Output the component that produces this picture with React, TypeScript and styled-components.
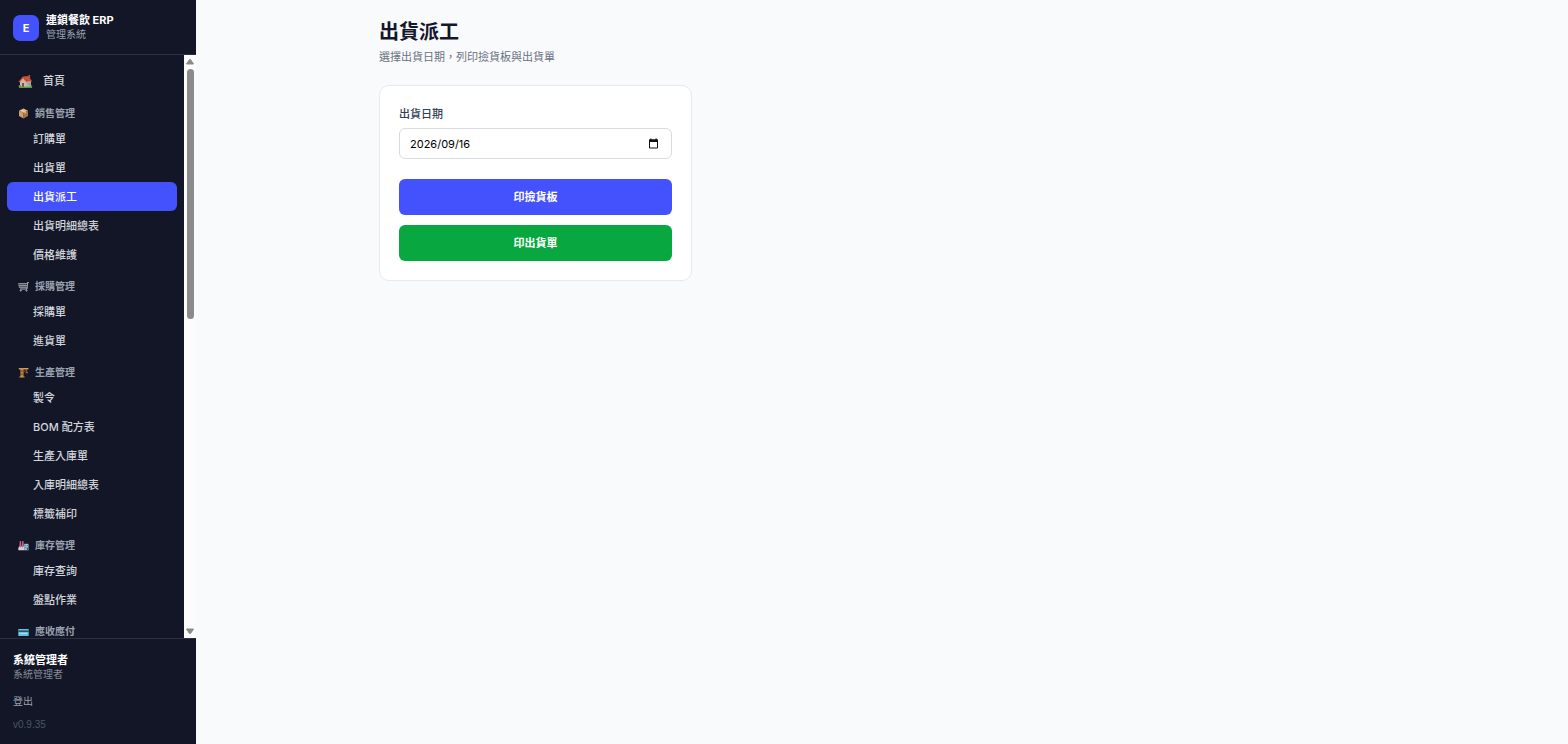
import React, { useState } from "react";
import styled, { createGlobalStyle, css } from "styled-components";

const GlobalStyle = createGlobalStyle`
  *, *::before, *::after { box-sizing: border-box; }
  body {
    margin: 0;
    background: #f9fafc;
    color: #14162a;
    font-family: "Liberation Sans", "Noto Sans CJK TC", sans-serif;
    font-size: 11px;
    line-height: 16px;
  }
  button, input { font-family: inherit; }
  h1, h2, p, ul { margin: 0; padding: 0; }
  ul { list-style: none; }
`;

const Shell = styled.div`
  display: grid;
  grid-template-columns: 196px 1fr;
  min-height: 100vh;
`;

const Sidebar = styled.aside`
  position: sticky;
  top: 0;
  height: 100vh;
  display: flex;
  flex-direction: column;
  background: #131626;
  color: #d1d5dc;
`;

const Brand = styled.div`
  display: flex;
  align-items: center;
  gap: 7px;
  padding: 13px 13px 12px;
  border-bottom: 1px solid #2b303f;
`;

const Logo = styled.div`
  width: 26px;
  height: 26px;
  border-radius: 7px;
  background: #4452fe;
  color: #fff;
  font-family: Inter, sans-serif;
  font-size: 11px;
  font-weight: 700;
  line-height: 26px;
  text-align: center;
`;

const BrandName = styled.div`
  color: #fff;
  font-family: Inter, "Noto Sans CJK TC", sans-serif;
  font-size: 11px;
  line-height: 15px;
  font-weight: 700;
`;

const BrandSub = styled.div`
  color: #99a1af;
  font-size: 10px;
  line-height: 14px;
`;

const ScrollArea = styled.div`
  flex: 1;
  min-height: 0;
  display: flex;
`;

const Nav = styled.nav`
  flex: 1;
  overflow: hidden;
  padding: 11px 7px 0;
`;

const NavLink = styled.a<{ $active?: boolean; $top?: boolean }>`
  display: flex;
  align-items: center;
  gap: 10px;
  height: ${(p) => (p.$top ? 30 : 29)}px;
  padding-left: ${(p) => (p.$top ? 11 : 26)}px;
  border-radius: 6px;
  color: #d1d5dc;
  font-family: Inter, "Noto Sans CJK TC", sans-serif;
  font-weight: 500;
  text-decoration: none;
  ${(p) =>
    p.$active &&
    css`
      background: #4452fe;
      color: #fff;
    `}
`;

const SectionTitle = styled.h2`
  display: flex;
  align-items: center;
  gap: 6px;
  padding: 10px 11px 2px;
  color: #99a1af;
  font-size: 10px;
  line-height: 16px;
  font-weight: 600;

  svg { margin-bottom: 1px; }
`;

const Rail = styled.div`
  width: 12px;
  display: flex;
  flex-direction: column;
  align-items: center;
  background: #fcfcfc;
`;

const RailTrack = styled.div`
  flex: 1;
  width: 7px;
`;

const RailThumb = styled.div`
  height: 45%;
  border-radius: 4px;
  background: #8b8b8b;
`;

const Account = styled.div`
  padding: 13px 13px 12px;
  border-top: 1px solid #2b303f;
  font-size: 10px;
  line-height: 14px;
`;

const UserName = styled.div`
  color: #fff;
  font-size: 11px;
  line-height: 16px;
  font-weight: 700;
`;

const UserRole = styled.div`
  color: #858b98;
`;

const LogoutButton = styled.button`
  display: block;
  margin: 13px 0 9px;
  padding: 0;
  border: 0;
  background: none;
  color: #99a1af;
  font-size: 10px;
  line-height: 14px;
  cursor: pointer;
`;

const Version = styled.div`
  color: #4a5565;
`;

const Main = styled.main`
  width: 100%;
  max-width: 1046px;
  margin: 0 auto;
  padding: 20px;
`;

const PageTitle = styled.h1`
  font-size: 20px;
  line-height: 24px;
  font-weight: 700;
`;

const PageHint = styled.p`
  margin-top: 5px;
  color: #6a7282;
  font-size: 11px;
`;

const Card = styled.form`
  max-width: 313px;
  margin-top: 20px;
  padding: 19px;
  border: 1px solid #e7e9ee;
  border-radius: 10px;
  background: #fff;
`;

const FieldLabel = styled.label`
  display: block;
  margin-bottom: 5px;
  color: #364153;
  font-size: 11px;
  line-height: 18px;
  font-weight: 500;
`;

const DateField = styled.div`
  display: flex;
  align-items: center;
  height: 31px;
  padding: 0 12px 0 10px;
  border: 1px solid #d8dbe0;
  border-radius: 6px;
  background: #fff;
`;

const DateInput = styled.input`
  flex: 1;
  min-width: 0;
  padding: 0;
  border: 0;
  outline: 0;
  background: none;
  color: #000;
  font-family: Inter, sans-serif;
  font-size: 11px;
  line-height: 16px;
`;

const PickerButton = styled.button`
  display: flex;
  padding: 0;
  border: 0;
  background: none;
  cursor: pointer;
`;

const Actions = styled.div`
  display: grid;
  gap: 10px;
  margin-top: 20px;
`;

const ActionButton = styled.button<{ $tone: "primary" | "success" }>`
  height: 36px;
  padding: 0 10px 2px;
  border: 0;
  border-radius: 6px;
  background: ${(p) => (p.$tone === "primary" ? "#4452fe" : "#09a740")};
  color: #fff;
  font-size: 11px;
  font-weight: 700;
  cursor: pointer;
`;

const HouseIcon = () => (
  <svg width="15" height="15" viewBox="0 0 15 15" aria-hidden="true">
    <path d="M3 7h10v6H3z" fill="#b9aea5" />
    <path d="M2 7.500 5 4l3.500 4v5H2z" fill="#cdb9a9" />
    <path d="M5 2.500 10.500 2 14.200 7.600H9.500z" fill="#c8533a" />
    <path d="M.6 7.800 5 2.500l4.800 5.600-1 .6L5 4.600 1.600 8.600z" fill="#e0603f" />
    <path d="M10.500 1h1.700v3h-1.700z" fill="#a5563f" />
    <path d="M4 9h2v4H4z" fill="#82523a" />
    <path d="M10 9h2.200v2H10z" fill="#6ba5c9" />
    <path d="M1 12.600h13V14H1z" fill="#5d9a4b" />
    <circle cx="1.900" cy="12.200" r="1.200" fill="#5d9a4b" />
    <circle cx="13.200" cy="12.300" r="1.100" fill="#5d9a4b" />
  </svg>
);

const BoxIcon = () => (
  <svg width="11" height="11" viewBox="0 0 11 11" aria-hidden="true">
    <path d="M5.500.6 10 2.700 5.600 5 1 2.800z" fill="#e0b985" />
    <path d="M1 2.800 5.600 5v5.500L1 8.100z" fill="#cfa06a" />
    <path d="M10 2.700v5.400l-4.400 2.400V5z" fill="#a87543" />
    <path d="M3 1.800 7.700 4v1.200l-1 .5V4.400L2.200 2.200z" fill="#ecd2a8" />
  </svg>
);

const CartIcon = () => (
  <svg width="11" height="11" viewBox="0 0 11 11" fill="none" stroke="#b4b9c0" aria-hidden="true">
    <path d="M10.800 1.500H9.500L9 8H2" />
    <path d="M.4 2.500h8.900M.8 4.500h8.300M1.200 6.400h7.900M.8 2.500l.6 4M3 2.500v4M5 2.500v4M7 2.500v4" strokeWidth=".7" />
    <circle cx="2.800" cy="9.500" r=".6" />
    <circle cx="8.500" cy="9.500" r=".6" />
  </svg>
);

const CraneIcon = () => (
  <svg width="11" height="11" viewBox="0 0 11 11" aria-hidden="true">
    <path d="M.8 1h9.600v1.400H.8z" fill="#e3a04a" />
    <path d="M2.500 1h3v9h-3z" fill="#d28f3d" />
    <path d="M3.200 3.500 4.800 5M4.800 3.500 3.200 5M3.200 6.500 4.800 8M4.800 6.500 3.200 8" stroke="#5b3b1f" strokeWidth=".7" />
    <path d="M5.500 5 8.500 2.400v2.400" fill="none" stroke="#a9793f" strokeWidth=".7" />
    <path d="M7.500 4.700H10v1.600H7.500z" fill="#8a5360" />
    <path d="M1.300 9.500h5.300v1H1.300z" fill="#d7954b" />
  </svg>
);

const FactoryIcon = () => (
  <svg width="11" height="11" viewBox="0 0 11 11" aria-hidden="true">
    <path d="M1.800 1h1.300l.4 6H1.300z" fill="#c0637f" />
    <path d="M4.200 1h1.300l.4 6H3.800z" fill="#c0637f" />
    <path d="M.3 10.300V7.700L2.200 6v1.600L4.200 6v1.600L6.200 6v4.300z" fill="#d0cfda" />
    <path d="M6.200 3.800h4.300v6.500H6.200z" fill="#9dc0d3" />
    <path d="M7.200 5h1v1h-1zM8.900 5h.9v1h-.9zM7.200 7h1v1h-1z" fill="#4c7690" />
    <path d="M8.800 7.500h1.200v2.800H8.800z" fill="#485a70" />
  </svg>
);

const CardIcon = () => (
  <svg width="11" height="11" viewBox="0 0 11 11" aria-hidden="true">
    <rect x=".3" y="3" width="10.400" height="7" rx=".6" fill="#67bfe4" />
    <path d="M.3 4.400h10.400v1.600H.3z" fill="#275468" />
    <path d="M1.300 7h8v1h-8z" fill="#a9dcee" />
  </svg>
);

const CalendarIcon = () => (
  <svg width="11" height="12" viewBox="0 0 11 12" aria-hidden="true">
    <path d="M1.500 2h8v8h-8z" fill="none" stroke="#111" />
    <path d="M1 1.500h9V4H1zM2.300.4h1.200V3H2.300zM7.500.4h1.200V3H7.500z" fill="#111" />
  </svg>
);

const RailArrow = ({ down = false }: { down?: boolean }) => (
  <svg width="12" height="14" viewBox="0 0 12 14" aria-hidden="true">
    <path d={down ? "M2.500 5h7L6.500 9.500h-1z" : "M2.500 9h7L6.500 4.500h-1z"} fill="#8b8b8b" stroke="#8b8b8b" strokeLinejoin="round" />
  </svg>
);

const sections = [
  { title: "銷售管理", icon: <BoxIcon />, items: ["訂購單", "出貨單", "出貨派工", "出貨明細總表", "價格維護"] },
  { title: "採購管理", icon: <CartIcon />, items: ["採購單", "進貨單"] },
  { title: "生產管理", icon: <CraneIcon />, items: ["製令", "BOM 配方表", "生產入庫單", "入庫明細總表", "標籤補印"] },
  { title: "庫存管理", icon: <FactoryIcon />, items: ["庫存查詢", "盤點作業"] },
  { title: "應收應付", icon: <CardIcon />, items: [] },
];

export default function App() {
  const [current, setCurrent] = useState("出貨派工");
  const [date, setDate] = useState("2026/09/16");

  return (
    <>
      <GlobalStyle />
      <Shell>
        <Sidebar>
          <Brand>
            <Logo>E</Logo>
            <div>
              <BrandName>連鎖餐飲 ERP</BrandName>
              <BrandSub>管理系統</BrandSub>
            </div>
          </Brand>
          <ScrollArea>
            <Nav>
              <NavLink href="#" $top>
                <HouseIcon />
                首頁
              </NavLink>
              {sections.map((section) => (
                <section key={section.title}>
                  <SectionTitle>
                    {section.icon}
                    {section.title}
                  </SectionTitle>
                  <ul>
                    {section.items.map((item) => (
                      <li key={item}>
                        <NavLink href="#" $active={item === current} onClick={() => setCurrent(item)}>
                          {item}
                        </NavLink>
                      </li>
                    ))}
                  </ul>
                </section>
              ))}
            </Nav>
            <Rail aria-hidden="true">
              <RailArrow />
              <RailTrack>
                <RailThumb />
              </RailTrack>
              <RailArrow down />
            </Rail>
          </ScrollArea>
          <Account>
            <UserName>系統管理者</UserName>
            <UserRole>系統管理者</UserRole>
            <LogoutButton type="button">登出</LogoutButton>
            <Version>v0.9.35</Version>
          </Account>
        </Sidebar>
        <Main>
          <PageTitle>出貨派工</PageTitle>
          <PageHint>選擇出貨日期，列印撿貨板與出貨單</PageHint>
          <Card onSubmit={(e) => e.preventDefault()}>
            <FieldLabel htmlFor="ship-date">出貨日期</FieldLabel>
            <DateField>
              <DateInput id="ship-date" type="text" value={date} onChange={(e) => setDate(e.target.value)} />
              <PickerButton type="button" aria-labelledby="ship-date">
                <CalendarIcon />
              </PickerButton>
            </DateField>
            <Actions>
              <ActionButton type="button" $tone="primary">印撿貨板</ActionButton>
              <ActionButton type="button" $tone="success">印出貨單</ActionButton>
            </Actions>
          </Card>
        </Main>
      </Shell>
    </>
  );
}
